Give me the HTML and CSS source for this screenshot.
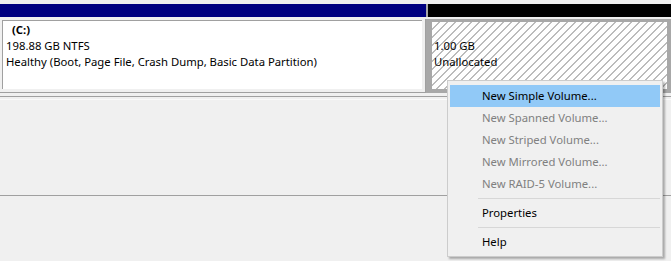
FILE: index.html
```html
<!DOCTYPE html>
<html lang="en">
<head>
  <meta charset="UTF-8">
  <title>Disk Management</title>
  <link rel="stylesheet" href="styles.css">
</head>
<body>
  <div class="disk-row">
    <div class="part part-primary">
      <div class="bar bar-primary"></div>
      <div class="frame">
        <div class="panel">
          <div class="label">(C:)</div>
          <div>198.88 GB NTFS</div>
          <div>Healthy (Boot, Page File, Crash Dump, Basic Data Partition)</div>
        </div>
      </div>
    </div>
    <div class="part part-free">
      <div class="bar bar-free"></div>
      <div class="free-frame">
        <div class="hatch">
          <div>&nbsp;</div>
          <div>1.00 GB</div>
          <div>Unallocated</div>
        </div>
      </div>
    </div>
  </div>
  <div class="lower">
    <div class="lower-edge"></div>
  </div>
  <div class="legend"></div>

  <!-- context menu for the unallocated space -->
  <ul class="menu">
    <li class="item active">New Simple Volume...</li>
    <li class="item disabled">New Spanned Volume...</li>
    <li class="item disabled">New Striped Volume...</li>
    <li class="item disabled">New Mirrored Volume...</li>
    <li class="item disabled">New RAID-5 Volume...</li>
    <li class="sep"></li>
    <li class="item">Properties</li>
    <li class="sep"></li>
    <li class="item">Help</li>
  </ul>
</body>
</html>
```

FILE: styles.css
```css
body {
  font-family: 'Noto Sans', 'Open Sans', sans-serif;
  font-size: 11.3px;
  background-color: #f0f0f0;
  color: #000;
  margin: 0;
  padding: 0;
  width: 671px;
  height: 261px;
  overflow: hidden;
  position: relative;
}

.disk-row {
  display: flex;
  padding-top: 4px;
}

.part {
  display: flex;
  flex-direction: column;
}

.part-primary {
  width: 426px;
}

.part-free {
  flex: 1;
}

.bar {
  height: 13px;
}

.bar-primary {
  background-color: #000080;
}

.bar-free {
  background-color: #000;
  border-left: 2px solid #a8a8a8;
}

.frame {
  margin-top: 2px;
  padding: 1px 3px 3px 2px;
  border-right: 1px solid #a0a0a0;
  border-bottom: 1px solid #a0a0a0;
}

.panel {
  background-color: #fff;
  border-top: 1px solid #a0a0a0;
  border-left: 1px solid #a0a0a0;
  padding: 1px 0 0 3px;
  box-sizing: border-box;
  height: 69px;
  line-height: 16px;
  white-space: nowrap;
}

.label {
  font-weight: bold;
  padding-left: 6px;
}

.free-frame {
  margin-top: 2px;
  border-style: solid;
  border-color: #a8a8a8;
  border-width: 3px 4px 4px 6px;
}

.hatch {
  height: 67px;
  box-sizing: border-box;
  padding: 0 0 0 2px;
  line-height: 16px;
  background-color: #fff;
  background-image: repeating-linear-gradient(135deg, #fff 0 4.6px, #bcbcbc 4.6px 5.66px);
}

.lower {
  margin-top: 3px;
  border-top: 1px solid #a0a0a0;
  height: 98px;
}

.lower-edge {
  margin-top: 2px;
  height: 1px;
  background-color: #fafafa;
}

.legend {
  border-top: 1px solid #a0a0a0;
}

.menu {
  position: absolute;
  left: 447px;
  top: 80px;
  width: 216px;
  box-sizing: border-box;
  margin: 0;
  padding: 4px 2px 3px 2px;
  list-style: none;
  background-color: #f0f0f0;
  border: 1px solid #cccccc;
  box-shadow: 2px 2px 2px rgba(0, 0, 0, 0.3);
}

.item {
  height: 22px;
  line-height: 22px;
  padding-left: 32px;
  white-space: nowrap;
}

.item.active {
  background-color: #91c9f7;
}

.item.disabled {
  color: #808080;
}

.sep {
  margin: 3px 0 3px 28px;
  height: 0;
  border-top: 1px solid #d7d7d7;
}
```
